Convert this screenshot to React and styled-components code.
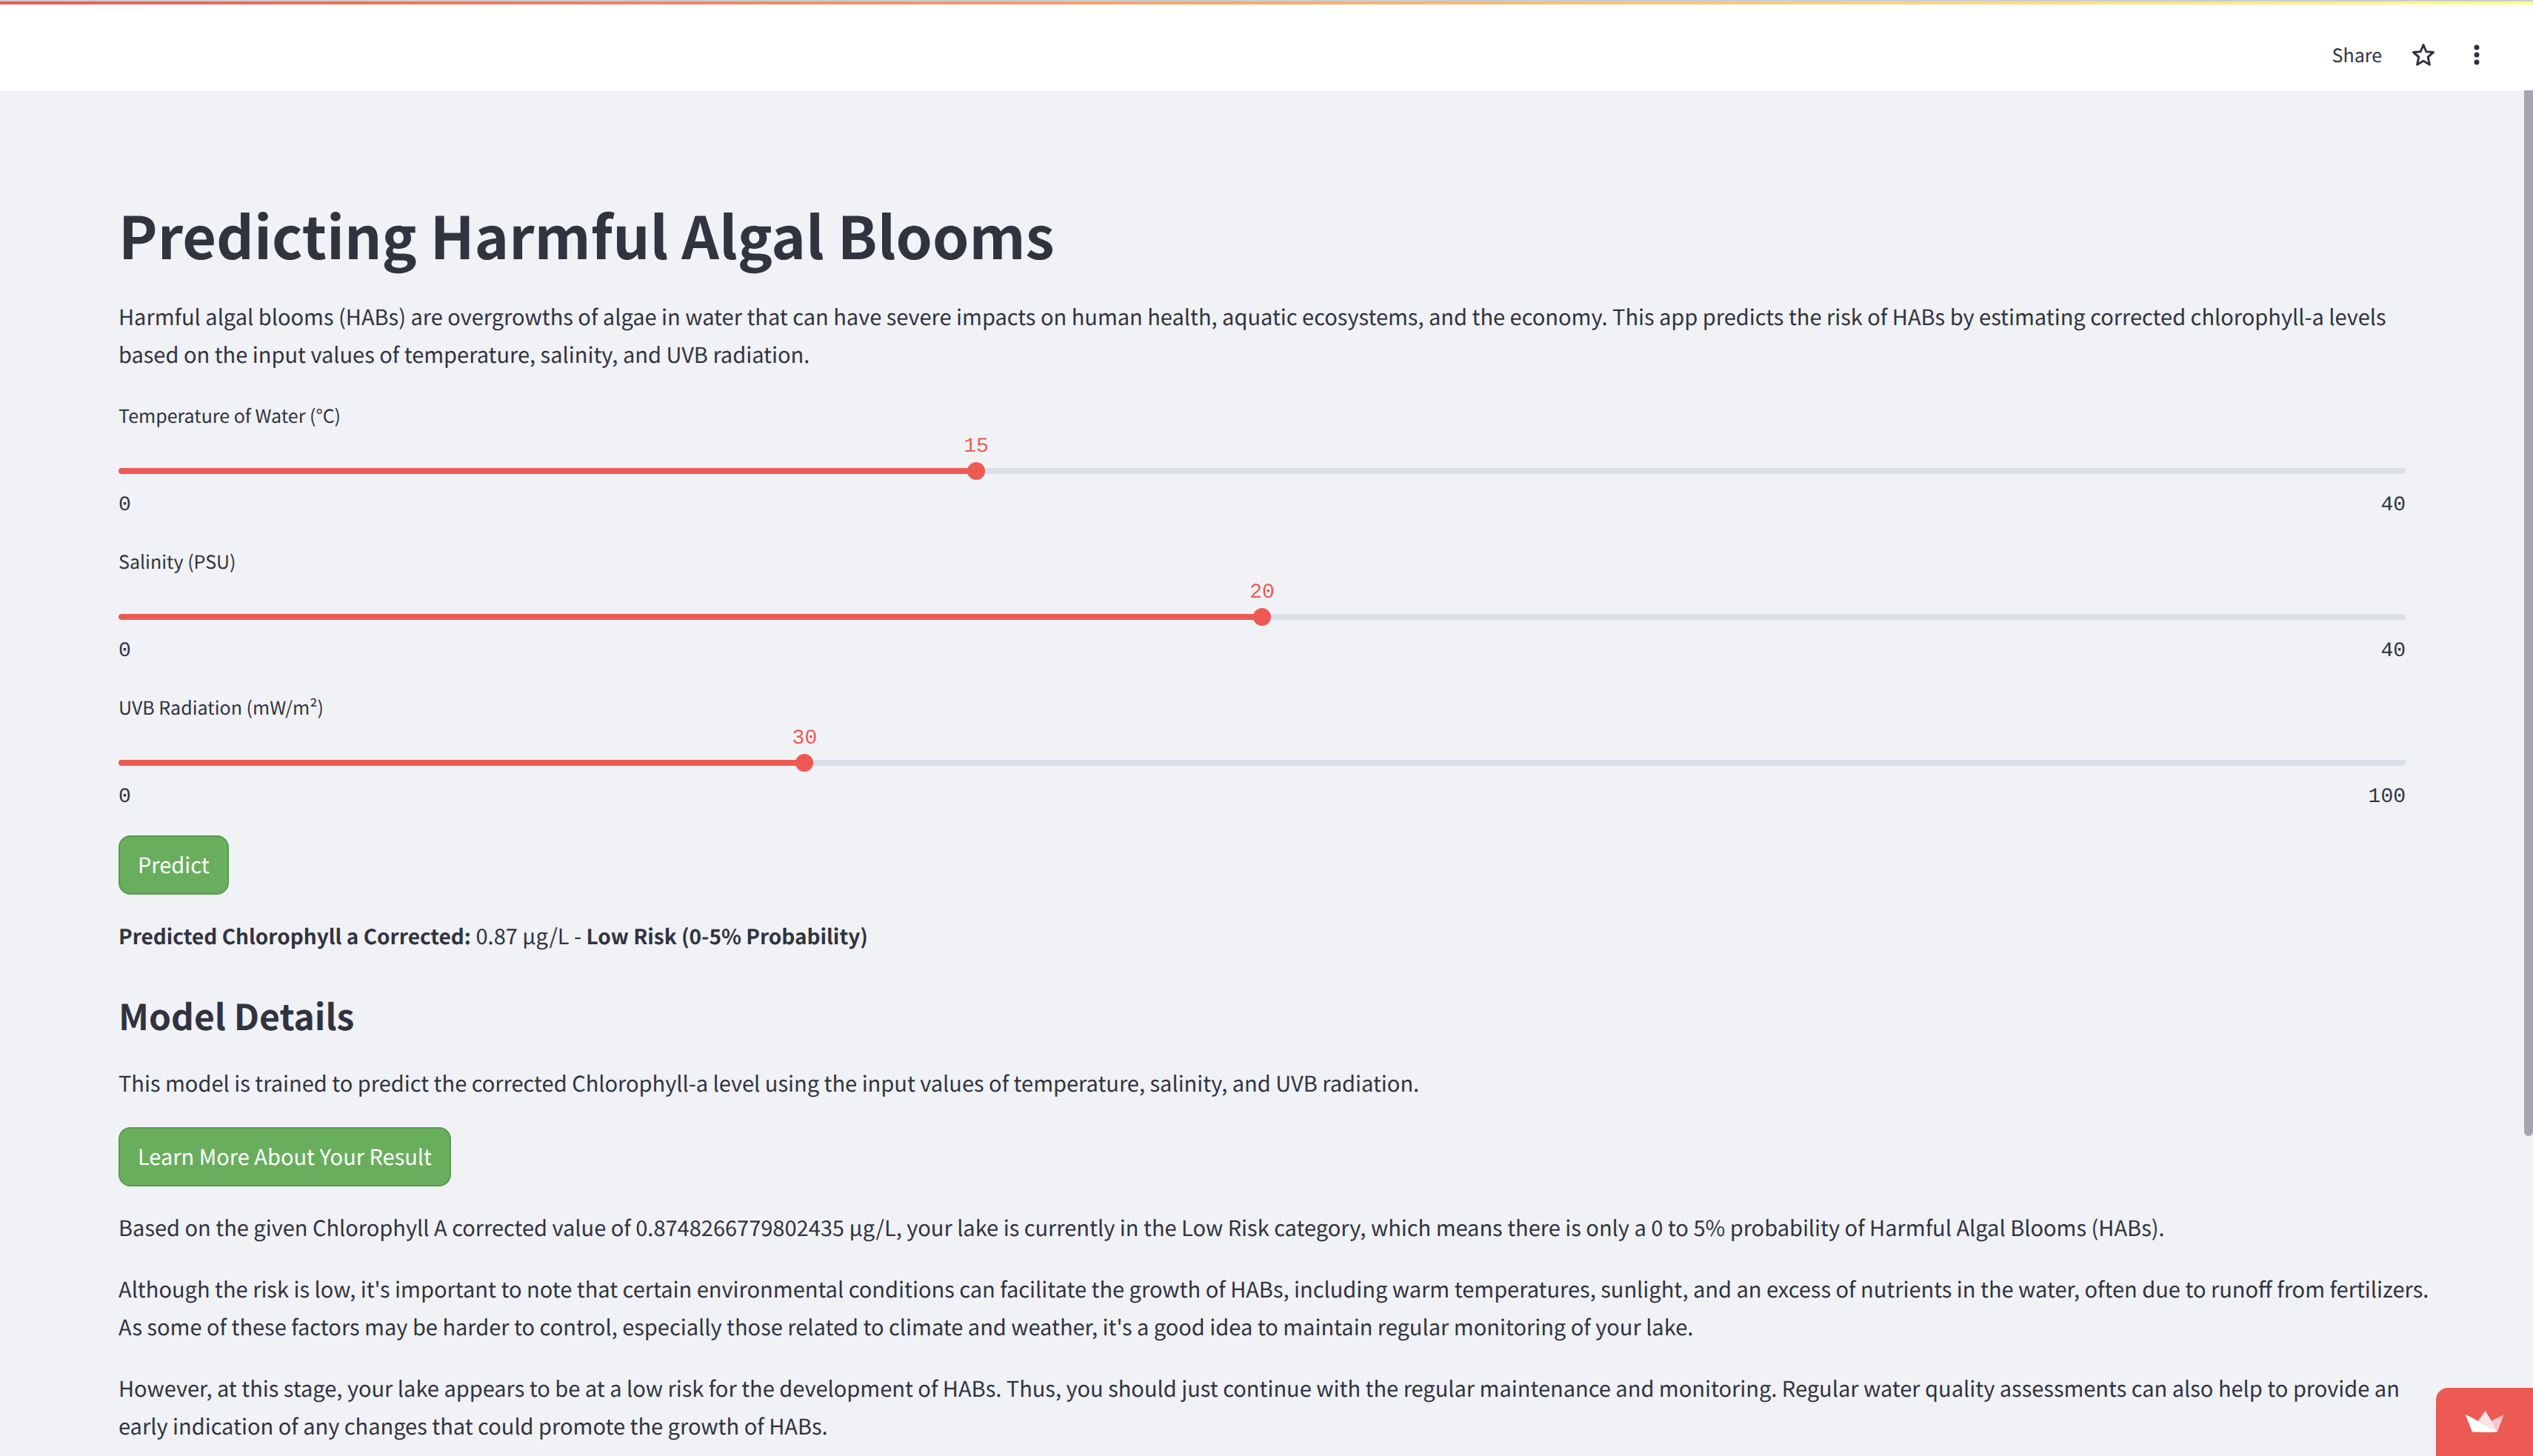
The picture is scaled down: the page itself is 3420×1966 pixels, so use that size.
import React, { useState } from "react";
import styled, { createGlobalStyle } from "styled-components";

const sans = `"Noto Sans CJK SC", "Noto Sans", sans-serif`;
const mono = `"Liberation Mono", monospace`;
const ink = "#31333f";
const red = "#ed5a53";

const GlobalStyle = createGlobalStyle`
  *, *::before, *::after { box-sizing: border-box; }
  body {
    margin: 0;
    background: #f0f2f6;
    color: ${ink};
    font-family: ${sans};
    font-size: 29px;
    line-height: 51px;
    text-rendering: geometricPrecision;
  }
`;

const Page = styled.div`
  display: flex;
  flex-direction: column;
  height: 100vh;
  overflow: hidden;
`;

const Header = styled.header`
  flex: none;
  background: #ffffff;
`;

const Decoration = styled.div`
  height: 6px;
  border-top: 2px solid #cccccc;
  background: linear-gradient(90deg, #ed5a53, #fffd8c);
`;

const Toolbar = styled.nav`
  display: flex;
  align-items: center;
  justify-content: flex-end;
  height: 116px;
  padding: 20px 60px 0 0;
`;

const ToolbarButton = styled.button`
  display: flex;
  align-items: center;
  justify-content: center;
  min-width: 32px;
  margin-left: ${(p) => p.$gap || 0}px;
  padding: 0;
  border: 0;
  background: none;
  color: ${ink};
  font-family: ${sans};
  font-size: 25px;
  line-height: 40px;
  text-rendering: inherit;
  cursor: pointer;
`;

const Scroller = styled.div`
  flex: 1;
  min-height: 0;
  display: flex;
`;

const Main = styled.main`
  flex: 1;
  min-width: 0;
  overflow: hidden;
  padding: 146px 160px 0;
`;

const ScrollTrack = styled.div`
  flex: none;
  width: 12px;
`;

const ScrollThumb = styled.div`
  height: 1412px;
  border-radius: 0 0 6px 6px;
  background: #a5a5af;
`;

const Title = styled.h1`
  margin: 0 0 38px;
  font-size: 79px;
  font-weight: 700;
  line-height: 96px;
`;

const Subtitle = styled.h2`
  margin: 0 0 35px;
  font-size: 48px;
  font-weight: 700;
  line-height: 64px;
`;

const Text = styled.p`
  margin: 0 -40px ${(p) => p.$after || 32}px 0;
`;

const Strong = styled.strong`
  font-size: 28px;
  line-height: 40px;
`;

const Fields = styled.form`
  display: grid;
  gap: 35px;
  margin-bottom: 31px;
`;

const Label = styled.label`
  display: block;
  margin-bottom: 3px;
  font-size: 25px;
  line-height: 40px;
`;

const Value = styled.output`
  display: flex;
  justify-content: center;
  width: 0;
  color: ${red};
  font-family: ${mono};
  font-size: 28px;
  line-height: 40px;
`;

const Control = styled.div`
  display: grid;
  align-items: center;
  height: 24px;
  margin-bottom: 15px;
`;

const Track = styled.div`
  grid-area: 1 / 1;
  height: 8px;
  border-radius: 4px;
`;

const Range = styled.input`
  grid-area: 1 / 1;
  appearance: none;
  height: 24px;
  margin: 0 -12px;
  background: transparent;
  cursor: pointer;

  &::-webkit-slider-thumb {
    appearance: none;
    width: 24px;
    height: 24px;
    border: 0;
    border-radius: 50%;
    background: ${red};
  }
`;

const Limits = styled.div`
  display: flex;
  justify-content: space-between;
  font-family: ${mono};
  font-size: 28px;
  line-height: 40px;
`;

const Button = styled.button`
  display: block;
  height: 80px;
  margin-bottom: 30px;
  padding: 0 24px 2px;
  border: 2px solid #5b9a53;
  border-radius: 16px;
  background: #69ae5d;
  color: #ffffff;
  font-family: ${sans};
  font-size: 29px;
  line-height: 51px;
  text-rendering: inherit;
  cursor: pointer;
`;

const HostBadge = styled.a`
  position: fixed;
  right: 0;
  bottom: 0;
  display: flex;
  justify-content: center;
  width: 131px;
  height: 92px;
  padding-top: 31px;
  border-top-left-radius: 16px;
  background: ${red};
`;

function SliderField({ id, label, max, initial }) {
  const [value, setValue] = useState(initial);
  const share = (value / max) * 100;
  return (
    <div>
      <Label htmlFor={id}>{label}</Label>
      <Value htmlFor={id} style={{ marginLeft: `${share}%` }}>{value}</Value>
      <Control>
        <Track style={{ background: `linear-gradient(90deg, ${red} ${share}%, #dadfe9 ${share}%)` }} />
        <Range
          id={id}
          type="range"
          min={0}
          max={max}
          value={value}
          onChange={(e) => setValue(Number(e.target.value))}
        />
      </Control>
      <Limits>
        <span>0</span>
        <span>{max}</span>
      </Limits>
    </div>
  );
}

function StarIcon() {
  return (
    <svg width="32" height="32" viewBox="0 0 32 32" fill="none" stroke={ink} strokeWidth="3" strokeLinejoin="round">
      <path d="M16 2.5 L19.8 11.8 L29.5 12.6 L22.2 19 L24.4 29.3 L16 24.2 L7.6 29.3 L9.8 19 L2.5 12.6 L12.2 11.8 Z" />
    </svg>
  );
}

function DotsIcon() {
  return (
    <svg width="32" height="32" viewBox="0 0 32 32" fill={ink}>
      <circle cx="16" cy="6" r="3.5" />
      <circle cx="16" cy="16" r="3.5" />
      <circle cx="16" cy="26" r="3.5" />
    </svg>
  );
}

function CrownIcon() {
  return (
    <svg width="52" height="30" viewBox="0 0 52 30">
      <path d="M51.4 5.4 L34.6 13.4 L43.4 27 Z" fill="#f8c6cd" />
      <path d="M26 0.8 L17 13.8 L43.4 27.4 L27.2 1 Q26.6 0.2 26 0.8 Z" fill="#fce5e9" />
      <path d="M0.6 5.2 L43.4 27.4 Q43 28.4 42 28.4 Q26 29.6 10 28.6 Q9 28.4 8.6 27.4 L0.2 6 Q0 5 0.6 5.2 Z" fill="#ffffff" />
    </svg>
  );
}

export default function App() {
  return (
    <Page>
      <GlobalStyle />
      <Header>
        <Decoration />
        <Toolbar>
          <ToolbarButton type="button">Share</ToolbarButton>
          <ToolbarButton type="button" aria-label="Favorite" $gap={40}>
            <StarIcon />
          </ToolbarButton>
          <ToolbarButton type="button" aria-label="More options" $gap={40}>
            <DotsIcon />
          </ToolbarButton>
        </Toolbar>
      </Header>
      <Scroller>
        <Main>
          <Title>Predicting Harmful Algal Blooms</Title>
          <Text $after={37}>
            Harmful algal blooms (HABs) are overgrowths of algae in water that can have severe impacts on human health,
            aquatic ecosystems, and the economy. This app predicts the risk of HABs by estimating corrected
            chlorophyll-a levels based on the input values of temperature, salinity, and UVB radiation.
          </Text>
          <Fields>
            <SliderField id="temperature" label="Temperature of Water (°C)" max={40} initial={15} />
            <SliderField id="salinity" label="Salinity (PSU)" max={40} initial={20} />
            <SliderField id="uvb" label="UVB Radiation (mW/m²)" max={100} initial={30} />
          </Fields>
          <Button type="button">Predict</Button>
          <Text $after={49}>
            <Strong>Predicted Chlorophyll a Corrected:</Strong> 0.87 µg/L - <Strong>Low Risk (0-5% Probability)</Strong>
          </Text>
          <Subtitle>Model Details</Subtitle>
          <Text $after={34}>
            This model is trained to predict the corrected Chlorophyll-a level using the input values of temperature,
            salinity, and UVB radiation.
          </Text>
          <Button type="button">Learn More About Your Result</Button>
          <Text>
            Based on the given Chlorophyll A corrected value of 0.8748266779802435 µg/L, your lake is currently in the
            Low Risk category, which means there is only a 0 to 5% probability of Harmful Algal Blooms (HABs).
          </Text>
          <Text>
            Although the risk is low, it's important to note that certain environmental conditions can facilitate the
            growth of HABs, including warm temperatures, sunlight, and an excess of nutrients in the water, often due to
            runoff from fertilizers. As some of these factors may be harder to control, especially those related to
            climate and weather, it's a good idea to maintain regular monitoring of your lake.
          </Text>
          <Text>
            However, at this stage, your lake appears to be at a low risk for the development of HABs. Thus, you should
            just continue with the regular maintenance and monitoring. Regular water quality assessments can also help
            to provide an early indication of any changes that could promote the growth of HABs.
          </Text>
        </Main>
        <ScrollTrack>
          <ScrollThumb />
        </ScrollTrack>
      </Scroller>
      <HostBadge href="#" aria-label="Hosted with Streamlit">
        <CrownIcon />
      </HostBadge>
    </Page>
  );
}
